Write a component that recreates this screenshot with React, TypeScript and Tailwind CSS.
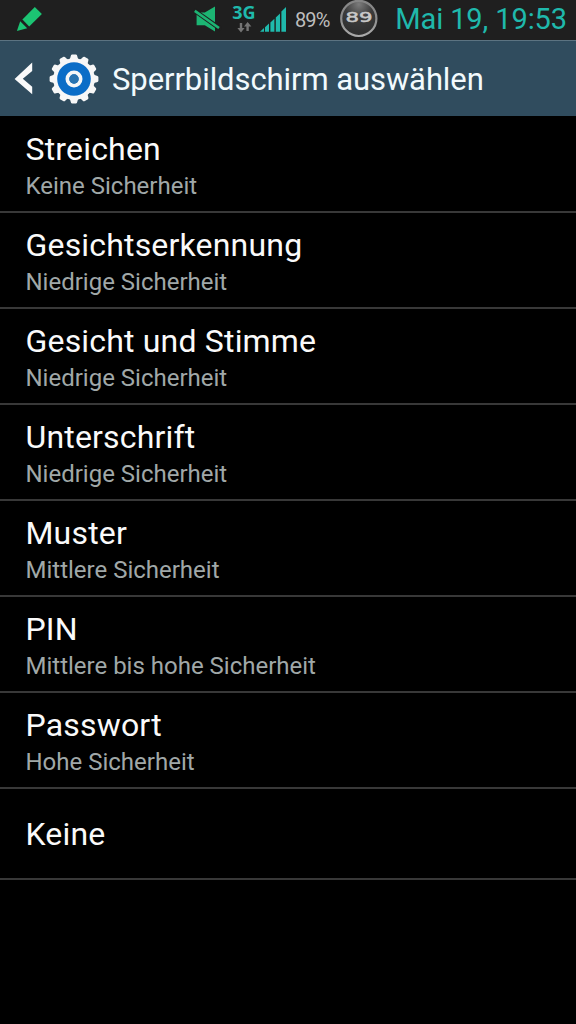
import clsx from "clsx";

type LockOption = {
  title: string;
  security?: string;
};

const options: LockOption[] = [
  { title: "Streichen", security: "Keine Sicherheit" },
  { title: "Gesichtserkennung", security: "Niedrige Sicherheit" },
  { title: "Gesicht und Stimme", security: "Niedrige Sicherheit" },
  { title: "Unterschrift", security: "Niedrige Sicherheit" },
  { title: "Muster", security: "Mittlere Sicherheit" },
  { title: "PIN", security: "Mittlere bis hohe Sicherheit" },
  { title: "Passwort", security: "Hohe Sicherheit" },
  { title: "Keine" },
];

const PencilIcon = () => (
  <svg width="26" height="26" viewBox="0 0 26 26" fill="#1cc473">
    <path d="M18.8 1 25.9 7.9 13.2 20.6 6.4 13.6Z" />
    <path d="M4.2 15.2 11.2 22.2 .9 25Z" />
  </svg>
);

const MutedIcon = () => (
  <svg width="28" height="26" viewBox="0 0 28 26" fill="#1cb573">
    <path d="M2.6 6.4h8.2L21 .6v24.8L10.8 19.2H2.6Z" />
    <path d="M-1 3.6 27 23.4" stroke="#1f1f1f" strokeWidth="4.6" />
    <path d="M.8 4.9 25 22" stroke="#1cb573" strokeWidth="2.6" />
  </svg>
);

const DataArrows = () => (
  <svg width="15" height="11" viewBox="0 0 15 11" fill="#747474">
    <path d="M2.8 1h2.4v5h2.4L4 10.4.4 6h2.4Z" />
    <path d="M9.4 9h2.4V4.4h2.6L10.6 0 7 4.4h2.4Z" />
  </svg>
);

const SignalIcon = () => (
  <svg width="27" height="26" viewBox="0 0 27 26" fill="#1fb9ac">
    <path d="M0 25.8 4 22v3.8Z" />
    <path d="M5 21.3 9 17.6v8.2H5Z" />
    <path d="M10.4 16.6 14.4 12.8v13h-4Z" />
    <path d="M15.8 11.4 20 7.4v18.4h-4.2Z" />
    <path d="M21.4 5.6 26 1v24.8h-4.6Z" />
  </svg>
);

const BatteryRing = () => (
  <svg width="40" height="40" viewBox="0 0 40 40">
    <defs>
      <linearGradient id="ring" x1="0" y1="0" x2="0" y2="1">
        <stop offset="0" stopColor="#858585" />
        <stop offset="0.5" stopColor="#8c8c8c" />
        <stop offset="1" stopColor="#ababab" />
      </linearGradient>
      <radialGradient id="dial" cx="0.5" cy="0.1" r="0.8">
        <stop offset="0" stopColor="#7c7c7c" />
        <stop offset="0.5" stopColor="#3c3c3c" />
        <stop offset="1" stopColor="#303030" />
      </radialGradient>
    </defs>
    <circle cx="18.8" cy="18.4" r="17.6" fill="url(#dial)" stroke="url(#ring)" strokeWidth="2.2" />
    <text
      x="19"
      y="22.4"
      textAnchor="middle"
      textLength="27"
      lengthAdjust="spacingAndGlyphs"
      fontFamily="DejaVu Sans, sans-serif"
      fontSize="13.5"
      fill="#c8c8c8"
      stroke="#c8c8c8"
      strokeWidth="0.5"
    >
      89
    </text>
  </svg>
);

const GearIcon = () => {
  const teeth = Array.from({ length: 12 }, (_, i) => i * 30);
  return (
    <svg width="50" height="50" viewBox="-25 -25 50 50">
      {teeth.map((angle) => (
        <path
          key={angle}
          d="M-5-19Q-3.6-20.5-3.3-22.8-3.1-24.3-2-24.4h4Q3.1-24.3 3.3-22.8 3.6-20.5 5-19Z"
          fill="#f7f7f7"
          transform={`rotate(${angle})`}
        />
      ))}
      <circle r="20.8" fill="#f7f7f7" />
      <circle r="16.8" fill="#0b6dc7" />
      <circle r="6.6" fill="none" stroke="#f7f7f7" strokeWidth="3.8" />
      <circle r="4.7" fill="#2a74b0" />
    </svg>
  );
};

const StatusBar = () => (
  <div className="flex h-10 items-start bg-[#1f1f1f]">
    <div className="ml-4 mt-[6px]">
      <PencilIcon />
    </div>
    <div className="ml-[152px] mt-[6px]">
      <MutedIcon />
    </div>
    <div className="ml-[10px] mt-[3px] flex w-[24px] flex-col items-center">
      <span className="font-['Open_Sans',sans-serif] text-[18px] leading-[19px] font-bold text-[#1fb9ac]">
        3G
      </span>
      <DataArrows />
    </div>
    <div className="ml-1 mt-[6px]">
      <SignalIcon />
    </div>
    <span className="ml-2 w-[45px] text-[20px] leading-[40px] tracking-[-0.9px] text-[#bdbdbd]">
      89%
    </span>
    <BatteryRing />
    <span className="ml-auto mr-[9px] text-[29px] leading-[38px] tracking-[-0.1px] whitespace-nowrap text-[#1fb9ac]">
      Mai 19, 19:53
    </span>
  </div>
);

const ActionBar = () => (
  <div className="flex h-[76px] items-center border-t border-[#5c7381] bg-[#304c5e]">
    <svg className="ml-[14px]" width="19" height="34" viewBox="0 0 19 34" fill="#fafafa">
      <path d="M18.2.6V9L8.8 16.8l9.4 8v7.4L.6 17Z" />
    </svg>
    <div className="ml-4">
      <GearIcon />
    </div>
    <h1 className="ml-[13px] pt-px text-[31px] leading-[41px] tracking-[-0.08px] whitespace-nowrap text-[#f2fafd]">
      Sperrbildschirm auswählen
    </h1>
  </div>
);

const OptionRow = ({ title, security }: LockOption) => (
  <li
    className={clsx(
      "flex flex-col border-b-2 border-[#383838] pl-[25.5px]",
      security ? "h-24 pt-[13px]" : "h-[91px] justify-center"
    )}
  >
    <span className="text-[32px] leading-[38px] tracking-[0.18px] text-[#fafafa]">{title}</span>
    {security && (
      <span className="text-[24px] leading-[36px] text-[#a0a8a8]">{security}</span>
    )}
  </li>
);

const App = () => {
  return (
    <div className="h-screen overflow-hidden bg-black font-['Roboto',sans-serif]">
      <StatusBar />
      <ActionBar />
      <ul className="pt-px">
        {options.map((option) => (
          <OptionRow key={option.title} {...option} />
        ))}
      </ul>
    </div>
  );
};

export default App;
